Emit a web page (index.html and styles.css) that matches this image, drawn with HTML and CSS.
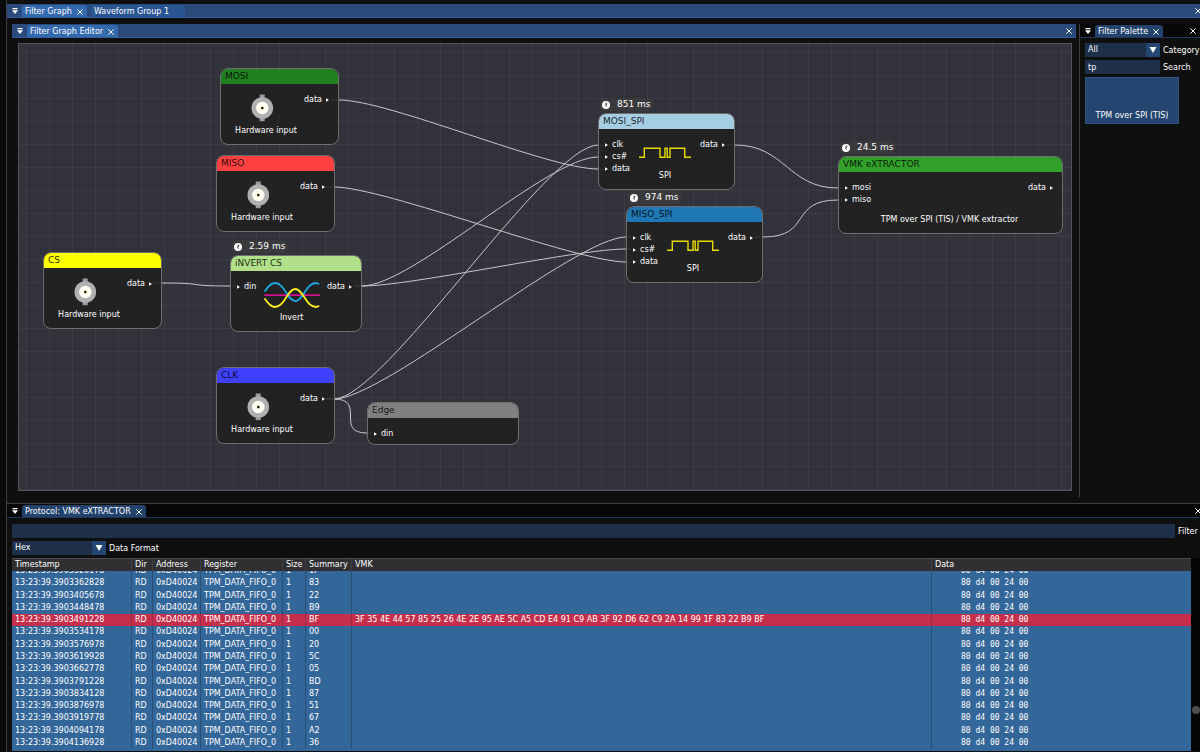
FILE: index.html
```html
<!DOCTYPE html>
<html lang="en">
<head>
    <meta charset="UTF-8">
    <meta name="viewport" content="width=device-width, initial-scale=1.0">
    <title>Filter Graph</title>
    <link rel="stylesheet" href="styles.css">
</head>
<body>
    <!-- shared icons -->
    <svg class="defs" aria-hidden="true">
        <symbol id="icon-menu" viewBox="0 0 6 6"><path d="M0.5 0H5.5V1.2H0.5ZM0 2.2H6L3 6Z" fill="#fff"/></symbol>
        <symbol id="icon-close" viewBox="0 0 6 6"><path d="M0.3 0.3L5.7 5.7M5.7 0.3L0.3 5.7" stroke="#fff" stroke-width="1"/></symbol>
        <symbol id="icon-down" viewBox="0 0 8 8"><path d="M0.5 1H7.5L4 7Z" fill="#fff"/></symbol>
        <symbol id="icon-pin" viewBox="0 0 3 4"><path d="M0 0.3L3 2L0 3.7Z" fill="#fff"/></symbol>
        <symbol id="icon-clock" viewBox="0 0 8 8">
            <circle cx="4" cy="4" r="4" fill="#fff"/>
            <path d="M4.2 1.4V4.2M5.2 2.8L3.6 4.4L4.6 5.6" stroke="#222" stroke-width="0.9" fill="none"/>
        </symbol>
        <symbol id="icon-bnc" viewBox="0 0 28 28">
            <path d="M11.7 0.5H16.7V27.2H11.7Z" fill="#9c9c9c"/>
            <circle cx="14.3" cy="14" r="10.8" fill="#b0b0b0"/>
            <circle cx="14.3" cy="14" r="6.2" fill="#fffff4"/>
            <circle cx="14.3" cy="14" r="1.5" fill="#7a7224"/>
            <circle cx="14.3" cy="14" r="0.9" fill="#000"/>
        </symbol>
        <symbol id="icon-invert" viewBox="0 0 56 28">
            <g fill="none" stroke-width="1.8" stroke-linecap="round">
                <path d="M1 14.2H55" stroke="#d0108c"/>
                <path d="M1 10C5 4 8 2 11 2C21 2 23 20 31.5 20C39 20 42 2 52 2L54.5 2.8" stroke="#18a8e0"/>
                <path d="M1 18C5 24 8 26 11 26C21 26 23 8 31.5 8C39 8 42 26 52 26L54.5 25.2" stroke="#ffee20"/>
            </g>
        </symbol>
        <symbol id="icon-spi" viewBox="0 0 54 28">
            <path d="M1 18.2H6.3V9.3H22V18.2H27V9.3H29.2V18.2H32V9.3H46.7V18.2H53" fill="none" stroke="#e6dc00" stroke-width="1.4"/>
        </symbol>
    </svg>

    <div class="dock">
        <div class="tabbar">
            <svg class="menu"><use href="#icon-menu"/></svg>
            <button class="tab active">Filter Graph <svg class="close"><use href="#icon-close"/></svg></button>
            <button class="tab wide">Waveform Group 1</button>
            <button class="close-panel edge" aria-label="Close"><svg class="close"><use href="#icon-close"/></svg></button>
        </div>

        <div class="upper">
            <div class="editor">
                <div class="tabbar">
                    <svg class="menu"><use href="#icon-menu"/></svg>
                    <button class="tab active">Filter Graph Editor <svg class="close"><use href="#icon-close"/></svg></button>
                    <button class="close-panel" aria-label="Close"><svg class="close"><use href="#icon-close"/></svg></button>
                </div>
                <div class="canvas">
                    <svg class="links" id="links"></svg>

                    <div class="node hardware mosi">
                        <div class="title">MOSI</div>
                        <div class="node-body">
                            <div class="node-main"><svg class="icon bnc"><use href="#icon-bnc"/></svg><span>Hardware input</span></div>
                            <div class="outs"><span>data<svg class="pin"><use href="#icon-pin"/></svg></span></div>
                        </div>
                    </div>

                    <div class="node hardware miso">
                        <div class="title">MISO</div>
                        <div class="node-body">
                            <div class="node-main"><svg class="icon bnc"><use href="#icon-bnc"/></svg><span>Hardware input</span></div>
                            <div class="outs"><span>data<svg class="pin"><use href="#icon-pin"/></svg></span></div>
                        </div>
                    </div>

                    <div class="node hardware cs">
                        <div class="title">CS</div>
                        <div class="node-body">
                            <div class="node-main"><svg class="icon bnc"><use href="#icon-bnc"/></svg><span>Hardware input</span></div>
                            <div class="outs"><span>data<svg class="pin"><use href="#icon-pin"/></svg></span></div>
                        </div>
                    </div>

                    <div class="node hardware clk">
                        <div class="title">CLK</div>
                        <div class="node-body">
                            <div class="node-main"><svg class="icon bnc"><use href="#icon-bnc"/></svg><span>Hardware input</span></div>
                            <div class="outs"><span>data<svg class="pin"><use href="#icon-pin"/></svg></span></div>
                        </div>
                    </div>

                    <div class="node invert">
                        <div class="runtime"><svg class="clock"><use href="#icon-clock"/></svg>2.59 ms</div>
                        <div class="title">iNVERT CS</div>
                        <div class="node-body">
                            <div class="ins"><span><svg class="pin"><use href="#icon-pin"/></svg>din</span></div>
                            <div class="node-main"><svg class="icon"><use href="#icon-invert"/></svg><span>Invert</span></div>
                            <div class="outs"><span>data<svg class="pin"><use href="#icon-pin"/></svg></span></div>
                        </div>
                    </div>

                    <div class="node edge-node">
                        <div class="title">Edge</div>
                        <div class="node-body">
                            <div class="ins"><span><svg class="pin"><use href="#icon-pin"/></svg>din</span></div>
                        </div>
                    </div>

                    <div class="node mosi-spi">
                        <div class="runtime"><svg class="clock"><use href="#icon-clock"/></svg>851 ms</div>
                        <div class="title">MOSI_SPI</div>
                        <div class="node-body">
                            <div class="ins">
                                <span><svg class="pin"><use href="#icon-pin"/></svg>clk</span>
                                <span><svg class="pin"><use href="#icon-pin"/></svg>cs#</span>
                                <span><svg class="pin"><use href="#icon-pin"/></svg>data</span>
                            </div>
                            <div class="node-main"><svg class="icon"><use href="#icon-spi"/></svg><span>SPI</span></div>
                            <div class="outs"><span>data<svg class="pin"><use href="#icon-pin"/></svg></span></div>
                        </div>
                    </div>

                    <div class="node miso-spi">
                        <div class="runtime"><svg class="clock"><use href="#icon-clock"/></svg>974 ms</div>
                        <div class="title">MISO_SPI</div>
                        <div class="node-body">
                            <div class="ins">
                                <span><svg class="pin"><use href="#icon-pin"/></svg>clk</span>
                                <span><svg class="pin"><use href="#icon-pin"/></svg>cs#</span>
                                <span><svg class="pin"><use href="#icon-pin"/></svg>data</span>
                            </div>
                            <div class="node-main"><svg class="icon"><use href="#icon-spi"/></svg><span>SPI</span></div>
                            <div class="outs"><span>data<svg class="pin"><use href="#icon-pin"/></svg></span></div>
                        </div>
                    </div>

                    <div class="node vmk">
                        <div class="runtime"><svg class="clock"><use href="#icon-clock"/></svg>24.5 ms</div>
                        <div class="title">VMK eXTRACTOR</div>
                        <div class="node-body">
                            <div class="ins">
                                <span><svg class="pin"><use href="#icon-pin"/></svg>mosi</span>
                                <span><svg class="pin"><use href="#icon-pin"/></svg>miso</span>
                            </div>
                            <div class="node-main"><span>TPM over SPI (TIS) / VMK extractor</span></div>
                            <div class="outs"><span>data<svg class="pin"><use href="#icon-pin"/></svg></span></div>
                        </div>
                    </div>
                </div>
            </div>

            <div class="palette">
                <div class="tabbar dim">
                    <svg class="menu"><use href="#icon-menu"/></svg>
                    <button class="tab active">Filter Palette <svg class="close"><use href="#icon-close"/></svg></button>
                    <button class="close-panel" aria-label="Close"><svg class="close"><use href="#icon-close"/></svg></button>
                </div>
                <div class="palette-body">
                    <div class="field">
                        <div class="combo">
                            <select id="category"><option>All</option></select>
                            <span class="arrow"><svg><use href="#icon-down"/></svg></span>
                        </div>
                        <label for="category">Category</label>
                    </div>
                    <div class="field">
                        <input type="text" id="search" value="tp">
                        <label for="search">Search</label>
                    </div>
                    <button class="tile">TPM over SPI (TIS)</button>
                </div>
            </div>
        </div>

        <div class="protocol">
            <div class="tabbar dim">
                <svg class="menu"><use href="#icon-menu"/></svg>
                <button class="tab active">Protocol: VMK eXTRACTOR <svg class="close"><use href="#icon-close"/></svg></button>
                <button class="close-panel edge" aria-label="Close"><svg class="close"><use href="#icon-close"/></svg></button>
            </div>
            <div class="protocol-body">
                <div class="field filter">
                    <input type="text" id="filter">
                    <label for="filter">Filter</label>
                </div>
                <div class="field">
                    <div class="combo">
                        <select id="format"><option>Hex</option></select>
                        <span class="arrow"><svg><use href="#icon-down"/></svg></span>
                    </div>
                    <label for="format">Data Format</label>
                </div>
                <div class="table-area">
                    <div class="table-scroll" id="table-scroll">
                        <table>
                            <colgroup>
                                <col class="c-time"><col class="c-dir"><col class="c-addr"><col class="c-reg">
                                <col class="c-size"><col class="c-sum"><col><col class="c-data">
                            </colgroup>
                            <thead>
                                <tr><th>Timestamp</th><th>Dir</th><th>Address</th><th>Register</th><th>Size</th><th>Summary</th><th>VMK</th><th>Data</th></tr>
                            </thead>
                            <tbody id="packets"></tbody>
                        </table>
                    </div>
                    <div class="scrollbar"><div class="grab"></div></div>
                </div>
            </div>
        </div>
    </div>

    <script src="script.js"></script>
</body>
</html>
```

FILE: script.js
```js
// links between nodes: x1, y1, x2, y2 at the node edges
const links = [
    [320, 56, 579, 125],
    [315, 143, 607, 218],
    [142, 239, 212, 242],
    [343, 242, 579, 113],
    [343, 242, 607, 205],
    [315, 355, 579, 101],
    [315, 355, 607, 193],
    [315, 355, 348, 389],
    [716, 101, 819, 144],
    [744, 193, 819, 156]
];

// each link runs straight under the node up to its pin
document.getElementById('links').innerHTML = links.map(function ([x1, y1, x2, y2]) {
    const bend = Math.min(50, x2 - x1);
    return `<path d="M${x1 - 8} ${y1}H${x1}C${x1 + bend} ${y1} ${x2 - bend} ${y2} ${x2} ${y2}H${x2 + 5}"/>`;
}).join('');

const key = '3F 35 4E 44 57 85 25 26 4E 2E 95 AE 5C A5 CD E4 91 C9 AB 3F 92 D6 62 C9 2A 14 99 1F 83 22 B9 BF';

const packets = [
    ['13:23:39.3903320178', '1F'],
    ['13:23:39.3903362828', '83'],
    ['13:23:39.3903405678', '22'],
    ['13:23:39.3903448478', 'B9'],
    ['13:23:39.3903491228', 'BF', key],
    ['13:23:39.3903534178', '00'],
    ['13:23:39.3903576978', '20'],
    ['13:23:39.3903619928', '5C'],
    ['13:23:39.3903662778', '05'],
    ['13:23:39.3903791228', 'BD'],
    ['13:23:39.3903834128', '87'],
    ['13:23:39.3903876978', '51'],
    ['13:23:39.3903919778', '67'],
    ['13:23:39.3904094178', 'A2'],
    ['13:23:39.3904136928', '36']
];

document.getElementById('packets').innerHTML = packets.map(function ([time, summary, vmk]) {
    return `<tr${vmk ? ' class="match"' : ''}><td>${time}</td><td>RD</td><td>0xD40024</td><td>TPM_DATA_FIFO_0</td>` +
        `<td>1</td><td>${summary}</td><td>${vmk || ''}</td><td class="bytes">80 d4 00 24 00</td></tr>`;
}).join('');

document.getElementById('table-scroll').scrollTop = 6;
```

FILE: styles.css
```css
* {
    box-sizing: border-box;
}

body {
    margin: 0;
    height: 100vh;
    overflow: hidden;
    background: #0a0a0a;
    color: #fff;
    font-family: "DejaVu Sans", sans-serif;
    font-size: 8px;
    line-height: 12px;
}

button, input, select {
    font: inherit;
    color: inherit;
    border: none;
    border-radius: 0;
    margin: 0;
    padding: 0;
}

svg {
    display: block;
    flex: none;
}

.defs {
    position: absolute;
    width: 0;
    height: 0;
}

.dock {
    display: flex;
    flex-direction: column;
    height: 100vh;
    padding-top: 4px;
    margin-left: 6px;
    border-left: 1px solid #3e3e48;
    background: #0f0f0f;
}

/* tab bars */
.tabbar {
    display: flex;
    align-items: flex-end;
    flex: none;
    height: 14px;
    padding-left: 5px;
    background: #294a7a;
    border-bottom: 1px solid #3361a0;
    white-space: nowrap;
    overflow: hidden;
}

.menu {
    width: 6px;
    height: 6px;
    margin: 0 4px 3px 0;
}

.tab {
    display: flex;
    align-items: center;
    gap: 5px;
    height: 12px;
    padding: 1px 4px 0 3px;
    margin-right: 4px;
    border-radius: 3px 3px 0 0;
    background: #2a5593;
}

.tab.active {
    background: #3369ad;
}

.tab.wide {
    padding-right: 16px;
}

.close {
    width: 6px;
    height: 6px;
}

.close-panel {
    margin: 0 4px 3px auto;
    background: none;
}

.close-panel.edge {
    margin-right: -1px;
}

.tabbar.dim {
    background: #070707;
    border-bottom-color: #1f3658;
}

.tabbar.dim .tab {
    background: #23426c;
}

/* graph editor */
.upper {
    display: grid;
    grid-template-columns: 1fr 121px;
    flex: 1;
    min-height: 0;
    padding-bottom: 6px;
}

.editor {
    display: flex;
    flex-direction: column;
    padding: 6px 3px 6px 5px;
    min-width: 0;
}

.canvas {
    position: relative;
    flex: 1;
    margin: 5px 4px 0 6px;
    border: 1px solid #53535b;
    background-color: #32323a;
    background-image:
        linear-gradient(90deg, #3c3c44 1px, transparent 1px),
        linear-gradient(#3c3c44 1px, transparent 1px);
    background-size: 23px 23px;
    background-position: 7px 8px;
    overflow: hidden;
}

.links {
    position: absolute;
    left: 0;
    top: 0;
    width: 100%;
    height: 100%;
    fill: none;
    stroke: #c8c8cc;
    stroke-width: 1;
}

.node {
    position: absolute;
    border: 1px solid #6e6e6e;
    border-radius: 8px;
    background: rgba(32, 32, 32, 0.87);
}

.title {
    height: 15px;
    padding-left: 4px;
    border-radius: 7px 7px 0 0;
    color: rgba(0, 0, 0, 0.85);
    font-size: 9px;
    line-height: 15px;
}

.node-body {
    display: flex;
    padding: 10px 9px 4px 6px;
}

.ins span, .outs span {
    display: flex;
    align-items: center;
    gap: 4px;
}

.pin {
    width: 3px;
    height: 4px;
}

.node-main {
    display: flex;
    flex: 1;
    flex-direction: column;
    align-items: center;
    justify-content: flex-end;
    gap: 3px;
    padding-bottom: 3px;
    white-space: nowrap;
}

.icon {
    width: 56px;
    height: 28px;
}

.hardware .node-body {
    padding-left: 0;
}

.hardware .node-main span {
    padding-left: 7px;
}

.icon.bnc {
    width: 28px;
}

.runtime {
    position: absolute;
    left: 0;
    bottom: 100%;
    display: flex;
    align-items: center;
    gap: 7px;
    margin-bottom: 3px;
    padding: 0 3px;
    border-radius: 6px;
    background: #3a3a3d;
    font-size: 9px;
    line-height: 13px;
    white-space: nowrap;
}

.clock {
    width: 8px;
    height: 8px;
}

.hardware { width: 119px; }
.mosi { left: 201px; top: 24px; }
.miso { left: 197px; top: 111px; }
.cs { left: 24px; top: 208px; }
.clk { left: 197px; top: 323px; }
.invert { left: 211px; top: 211px; width: 132px; }
.edge-node { left: 348px; top: 358px; width: 152px; }
.mosi-spi { left: 579px; top: 69px; width: 137px; }
.miso-spi { left: 607px; top: 162px; width: 137px; }
.vmk { left: 819px; top: 112px; width: 225px; }

.vmk .node-main {
    min-height: 47px;
}

.mosi .title { background: #208020; }
.miso .title { background: #ff4040; }
.cs .title { background: #ffff00; }
.clk .title { background: #4040ff; }
.invert .title { background: #b2df8a; }
.edge-node .title { background: #808080; }
.mosi-spi .title { background: #a6cee3; }
.miso-spi .title { background: #1f78b4; }
.vmk .title { background: #33a02c; }

/* form fields */
.field {
    display: flex;
    align-items: center;
    gap: 3px;
    height: 14px;
    white-space: nowrap;
}

.field input, .field select {
    width: 100%;
    height: 14px;
    padding: 0 3px;
    background: #1d2f49;
    appearance: none;
    outline: none;
}

.field label {
    padding-top: 1px;
}

.combo {
    position: relative;
    flex: none;
}

.arrow {
    position: absolute;
    right: 0;
    top: 0;
    display: flex;
    align-items: center;
    justify-content: center;
    width: 14px;
    height: 14px;
    background: #234672;
    pointer-events: none;
}

.arrow svg {
    width: 8px;
    height: 8px;
}

/* filter palette */
.palette {
    margin-top: 6px;
    border-left: 1px solid #3e3e48;
    overflow: hidden;
}

.palette-body {
    display: flex;
    flex-direction: column;
    gap: 3px;
    padding: 5px;
}

.palette .combo, .palette input {
    flex: none;
    width: 75px;
}

.tile {
    display: flex;
    align-items: flex-end;
    justify-content: center;
    width: 94px;
    height: 47px;
    padding-bottom: 1px;
    border: 1px solid #2d5485;
    background: #23456f;
}

/* protocol analyzer */
.protocol {
    flex: none;
    display: flex;
    flex-direction: column;
    height: 249px;
    border-top: 1px solid #3e3e48;
}

.protocol-body {
    display: flex;
    flex: 1;
    flex-direction: column;
    gap: 3px;
    min-height: 0;
    padding: 6px 0 1px 5px;
}

.filter input {
    flex: 1;
}

.protocol .combo {
    width: 94px;
}

.filter label {
    width: 22px;
}

.table-area {
    display: flex;
    flex: 1;
    min-height: 0;
}

.table-scroll {
    flex: 1;
    padding-bottom: 5px;
    background: #336699;
    overflow: hidden;
}

table {
    width: 100%;
    height: 197px;
    table-layout: fixed;
    border-collapse: separate;
    border-spacing: 0;
}

.c-time { width: 120px; }
.c-dir { width: 21px; }
.c-addr { width: 48px; }
.c-reg { width: 82px; }
.c-size { width: 23px; }
.c-sum { width: 46px; }
.c-data { width: 259px; }

th, td {
    padding: 0 0 0 3px;
    border-right: 1px solid #294e75;
    line-height: 12px;
    text-align: left;
    white-space: nowrap;
}

th:last-child, td:last-child {
    border-right: none;
}

th {
    position: sticky;
    top: 0;
    height: 13px;
    background: #303033;
    border-top: 1px solid #4a4a50;
    border-right-color: #3e3e44;
    font-weight: normal;
}

.match td {
    background: #c62f4c;
    border-right-color: #9c2c4a;
}

td.bytes {
    padding-left: 29px;
    font-family: "DejaVu Sans Mono", monospace;
}

.scrollbar {
    flex: none;
    display: flex;
    align-items: flex-end;
    width: 9px;
    padding: 0 0 37px 1px;
    background: #050505;
}

.grab {
    width: 8px;
    height: 8px;
    border-radius: 4px;
    background: #4f4f4f;
}
```
